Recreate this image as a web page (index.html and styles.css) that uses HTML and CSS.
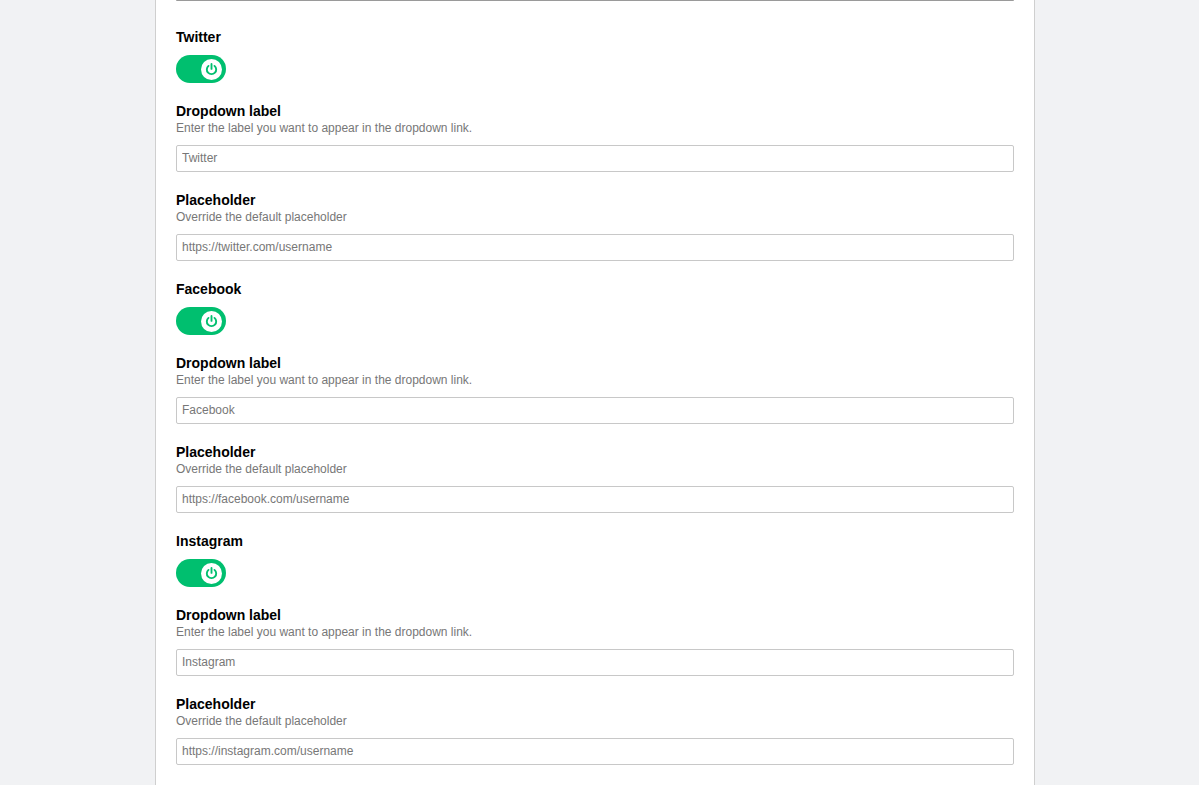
FILE: index.html
```html
<!DOCTYPE html>
<html>
<head>
<meta charset="utf-8">
<link rel="stylesheet" href="styles.css">
</head>
<body>
<div class="panel">
  <div class="prev-field"></div>

  <section class="network">
    <h3 class="net-title">Twitter</h3>
    <div class="toggle">
      <span class="knob"><svg viewBox="0 0 24 24" width="15" height="15"><path d="M12 3v8" fill="none" stroke="#00bf6f" stroke-width="3" stroke-linecap="round"/><path d="M7.2 6.2a7.5 7.5 0 1 0 9.6 0" fill="none" stroke="#00bf6f" stroke-width="3" stroke-linecap="round"/></svg></span>
    </div>
    <div class="field">
      <label class="field-label">Dropdown label</label>
      <p class="field-desc">Enter the label you want to appear in the dropdown link.</p>
      <input class="text-input" type="text" placeholder="Twitter">
    </div>
    <div class="field">
      <label class="field-label">Placeholder</label>
      <p class="field-desc">Override the default placeholder</p>
      <input class="text-input" type="text" placeholder="https://twitter.com/username">
    </div>
  </section>

  <section class="network">
    <h3 class="net-title">Facebook</h3>
    <div class="toggle">
      <span class="knob"><svg viewBox="0 0 24 24" width="15" height="15"><path d="M12 3v8" fill="none" stroke="#00bf6f" stroke-width="3" stroke-linecap="round"/><path d="M7.2 6.2a7.5 7.5 0 1 0 9.6 0" fill="none" stroke="#00bf6f" stroke-width="3" stroke-linecap="round"/></svg></span>
    </div>
    <div class="field">
      <label class="field-label">Dropdown label</label>
      <p class="field-desc">Enter the label you want to appear in the dropdown link.</p>
      <input class="text-input" type="text" placeholder="Facebook">
    </div>
    <div class="field">
      <label class="field-label">Placeholder</label>
      <p class="field-desc">Override the default placeholder</p>
      <input class="text-input" type="text" placeholder="https://facebook.com/username">
    </div>
  </section>

  <section class="network">
    <h3 class="net-title">Instagram</h3>
    <div class="toggle">
      <span class="knob"><svg viewBox="0 0 24 24" width="15" height="15"><path d="M12 3v8" fill="none" stroke="#00bf6f" stroke-width="3" stroke-linecap="round"/><path d="M7.2 6.2a7.5 7.5 0 1 0 9.6 0" fill="none" stroke="#00bf6f" stroke-width="3" stroke-linecap="round"/></svg></span>
    </div>
    <div class="field">
      <label class="field-label">Dropdown label</label>
      <p class="field-desc">Enter the label you want to appear in the dropdown link.</p>
      <input class="text-input" type="text" placeholder="Instagram">
    </div>
    <div class="field">
      <label class="field-label">Placeholder</label>
      <p class="field-desc">Override the default placeholder</p>
      <input class="text-input" type="text" placeholder="https://instagram.com/username">
    </div>
  </section>
</div>
</body>
</html>
```

FILE: styles.css
```css
html, body {
  margin: 0;
  padding: 0;
  height: 100%;
  overflow: hidden;
}
body {
  background: #f1f2f4;
  font-family: "Liberation Sans", Arial, sans-serif;
  color: #000;
}
.panel {
  box-sizing: border-box;
  width: 880px;
  margin-left: 155px;
  min-height: 100%;
  background: #fff;
  border-left: 1px solid #cfcfcf;
  border-right: 1px solid #cfcfcf;
  padding: 0 20px 40px 20px;
}
.prev-field {
  height: 0;
  border-bottom: 1px solid #9a9a9a;
  border-radius: 0 0 2px 2px;
}
.network {
  margin-top: 18px;
}
.network:first-of-type {
  margin-top: 26px;
}
.net-title {
  margin: 0;
  font-size: 14px;
  line-height: 20px;
  font-weight: bold;
  color: #000;
}
.toggle {
  margin-top: 8px;
  width: 50px;
  height: 28px;
  border-radius: 14px;
  background: #00bf6f;
  display: flex;
  align-items: center;
  justify-content: flex-end;
  padding-right: 4px;
  box-sizing: border-box;
}
.knob {
  width: 21px;
  height: 21px;
  border-radius: 50%;
  background: #fff;
  display: flex;
  align-items: center;
  justify-content: center;
}
.knob svg {
  display: block;
}
.field {
  margin-top: 20px;
  display: flex;
  flex-direction: column;
}
.field-label {
  font-size: 14px;
  line-height: 17px;
  font-weight: bold;
  color: #000;
}
.field-desc {
  margin: 0 0 8px 0;
  font-size: 12px;
  line-height: 17px;
  color: #777;
}
.text-input {
  box-sizing: border-box;
  width: 100%;
  height: 27px;
  margin: 0;
  border: 1px solid #c8c8c8;
  border-radius: 2px;
  padding: 0 5px 2px 5px;
  font-family: "Liberation Sans", Arial, sans-serif;
  font-size: 12px;
  color: #333;
  background: #fff;
  outline: none;
}
.text-input::placeholder {
  color: #777;
  opacity: 1;
}
```
